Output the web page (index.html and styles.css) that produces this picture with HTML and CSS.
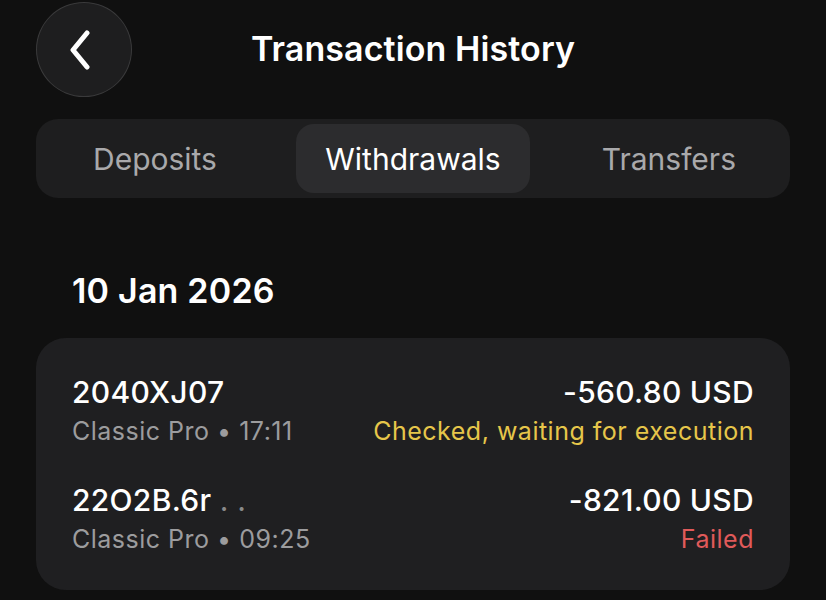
FILE: index.html
```html
<!DOCTYPE html>
<html lang="en">
<head>
<meta charset="utf-8">
<title>Transaction History</title>
<link rel="stylesheet" href="styles.css">
</head>
<body>
<div class="screen">
  <header class="header">
    <button class="back" aria-label="Back">
      <svg width="28" height="40" viewBox="0 0 28 40" fill="none">
        <path d="M20 3 L6 20 L20 37" stroke="#ffffff" stroke-width="5" stroke-linecap="round" stroke-linejoin="round"/>
      </svg>
    </button>
    <h1 class="title">Transaction History</h1>
  </header>

  <nav class="segments">
    <div class="seg seg-left">Deposits</div>
    <div class="seg active">Withdrawals</div>
    <div class="seg seg-right">Transfers</div>
  </nav>

  <h2 class="date">10 Jan 2026</h2>

  <section class="card">
    <div class="row">
      <div class="left">
        <div class="id">2040XJ07</div>
        <div class="meta">Classic Pro • 17:11</div>
      </div>
      <div class="right">
        <div class="amount">-560.80 USD</div>
        <div class="status pending">Checked, waiting for execution</div>
      </div>
    </div>
    <div class="row">
      <div class="left">
        <div class="id">22O2B.6r <span class="dots">. .</span></div>
        <div class="meta">Classic Pro • 09:25</div>
      </div>
      <div class="right">
        <div class="amount">-821.00 USD</div>
        <div class="status failed">Failed</div>
      </div>
    </div>
  </section>
</div>
</body>
</html>
```

FILE: styles.css
```css
* { box-sizing: border-box; }

html, body {
  margin: 0;
  padding: 0;
  background: #101010;
}

body {
  font-family: Inter, "Noto Sans", "Liberation Sans", sans-serif;
  color: #ffffff;
  width: 826px;
  height: 600px;
  overflow: hidden;
}

.screen {
  padding: 2px 36px 0 36px;
  display: flex;
  flex-direction: column;
}

.header {
  position: relative;
  height: 95px;
  display: flex;
  align-items: center;
  justify-content: center;
}

.back {
  position: absolute;
  left: 0;
  top: 0;
  width: 96px;
  height: 95px;
  border-radius: 50%;
  background: #1e1e1f;
  border: 1.5px solid #3a3a3b;
  display: flex;
  align-items: center;
  justify-content: center;
  padding: 0 6px 0 0;
}

.title {
  margin: -2px 0 0 0;
  font-size: 34px;
  font-weight: 600;
  letter-spacing: 0.1px;
}

.segments {
  margin-top: 22px;
  height: 79px;
  background: #1e1e1f;
  border-radius: 22px;
  display: grid;
  grid-template-columns: 1fr auto 1fr;
  padding: 5px 4px;
}

.seg {
  display: flex;
  align-items: center;
  justify-content: center;
  padding: 0 28px;
  font-size: 30px;
  color: #a9a9ab;
  border-radius: 18px;
}

.seg-left {
  justify-self: start;
  margin-left: 25px;
}

.seg-right {
  justify-self: end;
  margin-right: 22px;
}

.seg.active {
  background: #2c2c2e;
  color: #ffffff;
  padding: 0 29px;
}

.date {
  margin: 73px 0 0 36px;
  font-size: 34px;
  font-weight: 600;
  line-height: 40px;
  letter-spacing: 0.2px;
}

.card {
  margin-top: 27px;
  background: #1f1f21;
  border-radius: 30px;
  padding: 36px;
  display: flex;
  flex-direction: column;
  gap: 36px;
}

.row {
  display: flex;
  justify-content: space-between;
  align-items: flex-start;
}

.left, .right {
  display: flex;
  flex-direction: column;
  gap: 6px;
}

.right { align-items: flex-end; }

.id, .amount {
  font-size: 30px;
  font-weight: 500;
  line-height: 36px;
  letter-spacing: 0.3px;
}

.dots { color: #8a8a8a; font-weight: 400; }

.meta, .status {
  font-size: 25px;
  line-height: 30px;
  letter-spacing: 0.5px;
}

.meta { color: #9c9c9e; }
.pending { color: #e6c64a; }
.failed { color: #e05a5a; }
```
